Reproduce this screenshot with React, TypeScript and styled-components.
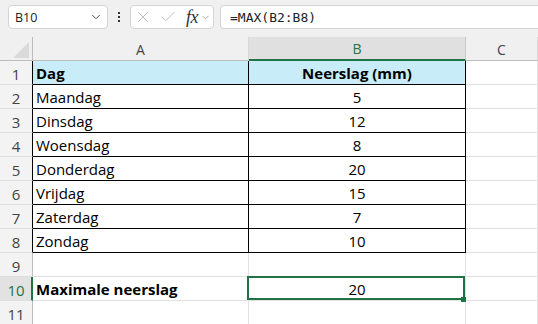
import React from "react";
import styled, { createGlobalStyle } from "styled-components";
import { ChevronDown, X, Check } from "lucide-react";

const GlobalStyle = createGlobalStyle`
  html, body {
    margin: 0;
    padding: 0;
    background: #ffffff;
    overflow: hidden;
  }
  body {
    font-family: "Open Sans", "Liberation Sans", sans-serif;
  }
`;

const Page = styled.div`
  width: 538px;
  height: 324px;
  overflow: hidden;
  display: flex;
  flex-direction: column;
`;

const Toolbar = styled.div`
  height: 37px;
  flex: none;
  box-sizing: border-box;
  background: #f0f0f0;
  display: flex;
  align-items: flex-start;
  padding: 5px 0 0 8px;
`;

const Box = styled.div<{ $w?: number; $grow?: boolean }>`
  box-sizing: border-box;
  height: 24px;
  background: #ffffff;
  border: 1px solid #d4d4d4;
  border-radius: 4px;
  display: flex;
  align-items: center;
  ${(p) => (p.$w ? `width: ${p.$w}px; flex: none;` : "")}
  ${(p) => (p.$grow ? "flex: 1; border-right: none; border-radius: 4px 0 0 4px;" : "")}
`;

const NameText = styled.span`
  font-family: "Open Sans", sans-serif;
  font-size: 12.5px;
  color: #222;
  padding-left: 6px;
  flex: 1;
`;

const Dots = styled.div`
  width: 22px;
  flex: none;
  height: 24px;
  display: flex;
  flex-direction: column;
  align-items: center;
  justify-content: center;
  gap: 2px;

  span {
    width: 2px;
    height: 2px;
    background: #333;
  }
`;

const FxIcons = styled.div`
  display: flex;
  align-items: center;
  gap: 7px;
  padding-left: 3px;
  color: #b8b8b8;
`;

const FxLabel = styled.span`
  font-family: "Liberation Serif", serif;
  font-style: italic;
  font-size: 18px;
  line-height: 20px;
  color: #333;
  margin-left: 9px;
  letter-spacing: -0.5px;
`;

const Formula = styled.span`
  font-family: "DejaVu Sans Mono", "Liberation Mono", monospace;
  font-size: 13px;
  color: #222;
  padding-left: 9px;
`;

const Gap = styled.div<{ $w: number }>`
  width: ${(p) => p.$w}px;
  flex: none;
`;

const Sheet = styled.div`
  display: grid;
  grid-template-columns: 33px 216px 217px 1fr;
  grid-auto-rows: 24px;
`;

const Corner = styled.div`
  box-sizing: border-box;
  background: #f0f0f0;
  border-right: 1px solid #bdbdbd;
  border-bottom: 1px solid #bdbdbd;
  display: flex;
  align-items: flex-end;
  justify-content: flex-end;
  padding: 0 3px 2px 0;
`;

const ColHead = styled.div<{ $sel?: boolean }>`
  box-sizing: border-box;
  background: ${(p) => (p.$sel ? "#e0e0e0" : "#f0f0f0")};
  border-right: 1px solid ${(p) => (p.$sel ? "#c8c8c8" : "#d8d8d8")};
  border-bottom: ${(p) => (p.$sel ? "2px solid #217346" : "1px solid #bdbdbd")};
  color: ${(p) => (p.$sel ? "#217346" : "#444")};
  font-size: 14px;
  display: flex;
  align-items: center;
  justify-content: center;
  padding-top: 1px;
`;

const RowHead = styled.div<{ $sel?: boolean; $boxed?: boolean }>`
  box-sizing: border-box;
  background: ${(p) => (p.$sel ? "#e2e2e2" : "#f3f3f3")};
  border-bottom: 1px solid #dedede;
  border-right: ${(p) =>
    p.$sel ? "2px solid #217346" : p.$boxed ? "1px solid #000" : "1px solid #bdbdbd"};
  color: ${(p) => (p.$sel ? "#217346" : "#444")};
  font-size: 15px;
  display: flex;
  align-items: flex-end;
  justify-content: center;
  padding-left: ${(p) => (p.$sel ? "1px" : "0")};
`;

const Cell = styled.div<{
  $bold?: boolean;
  $center?: boolean;
  $fill?: boolean;
  $boxed?: boolean;
}>`
  box-sizing: border-box;
  position: relative;
  background: ${(p) => (p.$fill ? "#c9ecf9" : "#ffffff")};
  border-right: 1px solid ${(p) => (p.$boxed ? "#000" : "#e1e1e1")};
  border-bottom: 1px solid ${(p) => (p.$boxed ? "#000" : "#e1e1e1")};
  font-size: 15px;
  font-weight: ${(p) => (p.$bold ? 700 : 400)};
  color: #000;
  display: flex;
  align-items: flex-end;
  justify-content: ${(p) => (p.$center ? "center" : "flex-start")};
  padding-left: ${(p) => (p.$center ? "0" : "3px")};
  padding-bottom: 1px;
  white-space: nowrap;
`;

const Selection = styled.div`
  position: absolute;
  inset: -1px 0 0 -2px;
  border: 2px solid #217346;
  pointer-events: none;
  z-index: 2;
`;

const Handle = styled.div`
  position: absolute;
  right: -3px;
  bottom: -4px;
  width: 5px;
  height: 5px;
  background: #217346;
`;

type Row = {
  a: string;
  b: string;
  head?: boolean;
  boxed?: boolean;
  bold?: boolean;
  selected?: boolean;
};

const rows: Row[] = [
  { a: "Dag", b: "Neerslag (mm)", head: true, boxed: true },
  { a: "Maandag", b: "5", boxed: true },
  { a: "Dinsdag", b: "12", boxed: true },
  { a: "Woensdag", b: "8", boxed: true },
  { a: "Donderdag", b: "20", boxed: true },
  { a: "Vrijdag", b: "15", boxed: true },
  { a: "Zaterdag", b: "7", boxed: true },
  { a: "Zondag", b: "10", boxed: true },
  { a: "", b: "" },
  { a: "Maximale neerslag", b: "20", bold: true, selected: true },
  { a: "", b: "" },
];

export default function App() {
  return (
    <Page>
      <GlobalStyle />
      <Toolbar>
        <Box $w={100}>
          <NameText>B10</NameText>
          <ChevronDown size={14} color="#444" strokeWidth={1.6} style={{ marginRight: 4 }} />
        </Box>
        <Dots>
          <span />
          <span />
          <span />
        </Dots>
        <Box $w={84}>
          <FxIcons>
            <X size={18} strokeWidth={1.2} />
            <Check size={18} strokeWidth={1.2} />
          </FxIcons>
          <FxLabel>fx</FxLabel>
          <ChevronDown size={11} color="#888" strokeWidth={1.6} style={{ marginLeft: 2 }} />
        </Box>
        <Gap $w={6} />
        <Box $grow>
          <Formula>=MAX(B2:B8)</Formula>
        </Box>
      </Toolbar>
      <Sheet>
        <Corner>
          <svg width="16" height="16" viewBox="0 0 16 16">
            <polygon points="16,0 16,16 0,16" fill="#dadada" />
          </svg>
        </Corner>
        <ColHead>A</ColHead>
        <ColHead $sel>B</ColHead>
        <ColHead>C</ColHead>
        {rows.map((r, i) => (
          <React.Fragment key={i}>
            <RowHead $sel={r.selected} $boxed={r.boxed}>
              {i + 1}
            </RowHead>
            <Cell $bold={r.head || r.bold} $fill={r.head} $boxed={r.boxed}>
              {r.a}
            </Cell>
            <Cell $center $bold={r.head} $fill={r.head} $boxed={r.boxed}>
              {r.b}
              {r.selected && (
                <Selection>
                  <Handle />
                </Selection>
              )}
            </Cell>
            <Cell />
          </React.Fragment>
        ))}
      </Sheet>
    </Page>
  );
}
